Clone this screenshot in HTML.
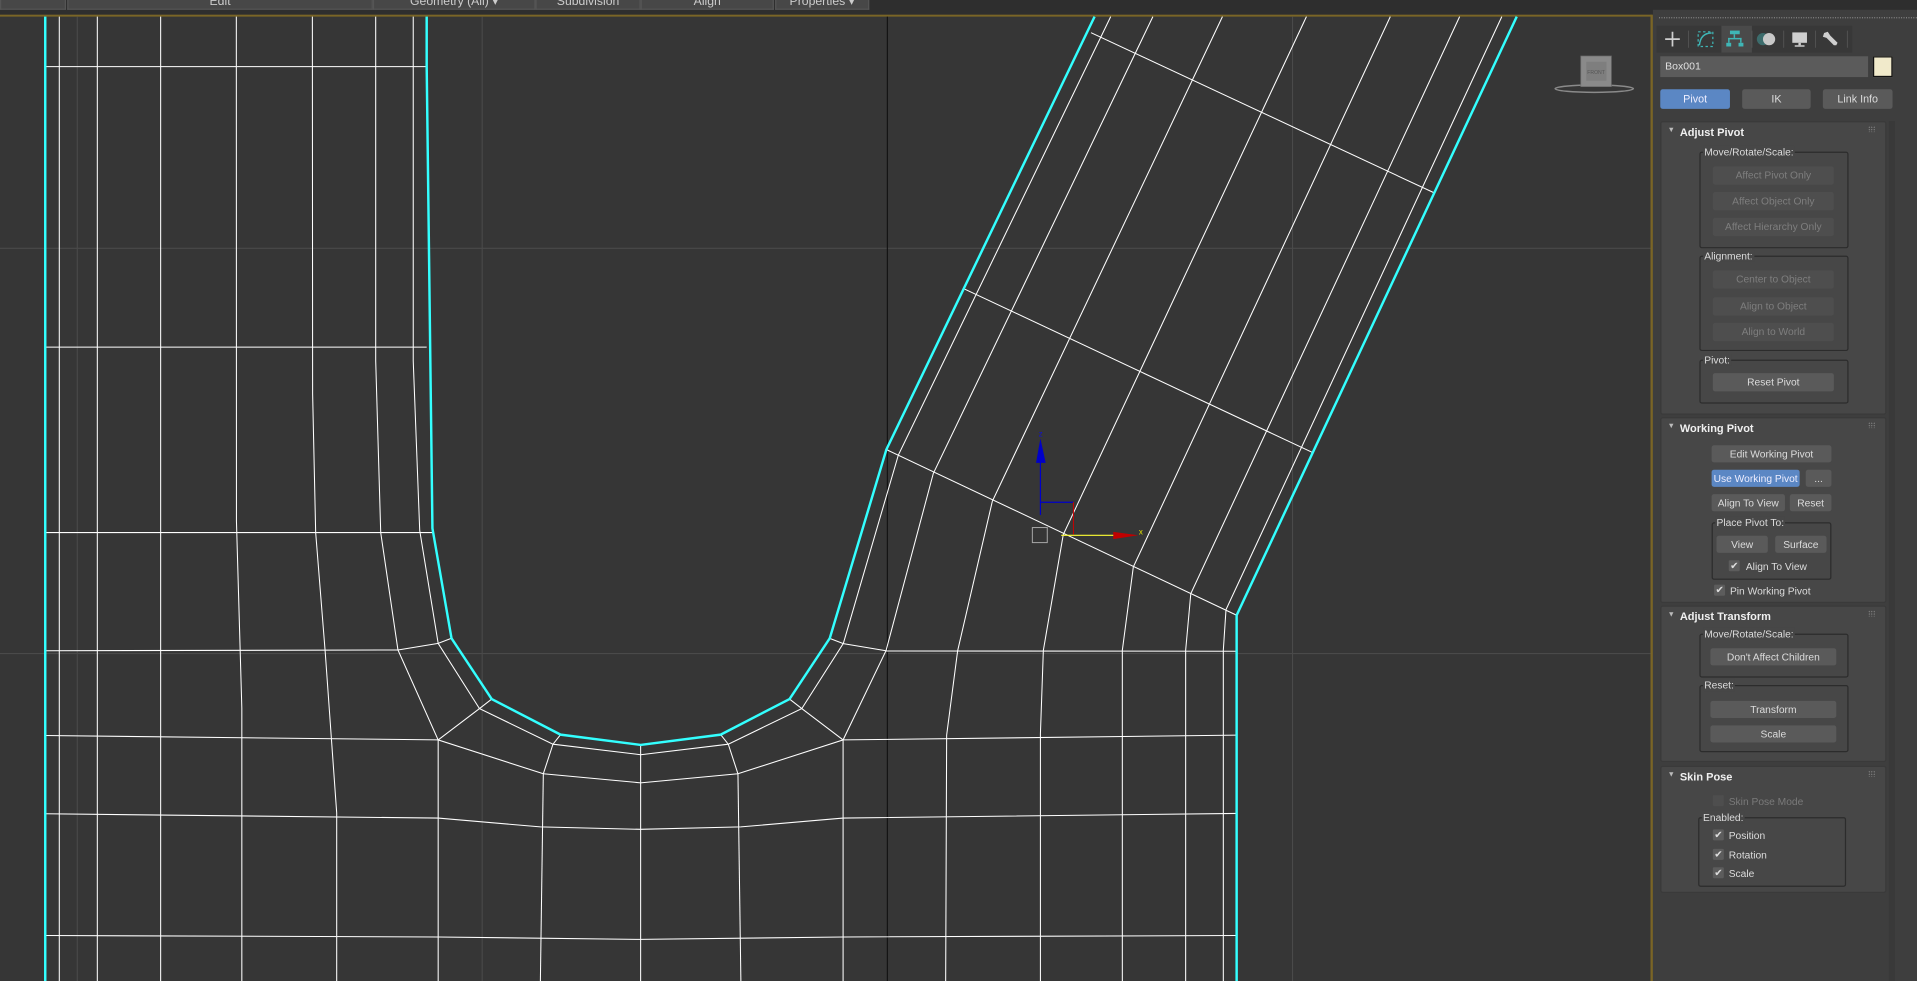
<!DOCTYPE html>
<html><head><meta charset="utf-8">
<style>
html,body{margin:0;padding:0;background:#363636;overflow:hidden;width:1917px;height:981px}
#w{position:absolute;left:0;top:0;width:1568px;height:802px;transform:scale(1.22258,1.22319);transform-origin:0 0;font-family:"Liberation Sans",sans-serif;background:#363636}
.a{position:absolute}
.tb{position:absolute;top:0;height:7px;background:#474747;border:1px solid #555;border-top:none;color:#ccc;font-size:10px;text-align:center;line-height:4px;overflow:hidden}
.btn{position:absolute;height:15px;line-height:15px;background:#5a5a5a;border-radius:2px;color:#dcdcdc;text-align:center;font-size:8.4px;white-space:nowrap;overflow:hidden}
.dis{background:#4e4e4e;color:#7e7e7e}
.blue{background:#5b87c4;color:#eef}
.grp{position:absolute;border:1px solid #2c2c2c;border-radius:2px}
.lbl{position:absolute;color:#dcdcdc;font-size:8.4px;background:#474747;padding:0 1px;line-height:10px;white-space:nowrap}
.ro{position:absolute;left:1358px;width:183px;background:#474747;border:1px solid #3a3a3a;border-radius:2px}
.tt{position:absolute;left:15px;top:3px;color:#f0f0f0;font-size:9px;font-weight:bold;white-space:nowrap}
.tri{position:absolute;left:5px;top:4px;color:#bbb;font-size:6px}
.grip{position:absolute;right:8px;top:3px;width:6px;height:5px;background-image:radial-gradient(#888 35%,transparent 40%);background-size:2px 2px}
.cb{position:absolute;width:9px;height:9px;background:#5c5c5c;border-radius:1px;color:#ddd;font-size:8px;line-height:9px;text-align:center}
.ct{position:absolute;color:#dcdcdc;font-size:8.4px;line-height:10px;white-space:nowrap}
</style></head><body><div id="w">
<!-- top toolbar -->
<div class="a" style="left:0;top:0;width:1568px;height:12px;background:#2e2e2e"></div>
<div class="tb" style="left:0;width:52px"></div>
<div class="tb" style="left:55px;width:248px">Edit</div>
<div class="tb" style="left:305px;width:131px">Geometry (All) ▾</div>
<div class="tb" style="left:438px;width:84px">Subdivision</div>
<div class="tb" style="left:524px;width:107px">Align</div>
<div class="tb" style="left:634px;width:75px">Properties ▾</div>
<div class="a" style="left:0;top:11.5px;width:1351px;height:2px;background:#7a6526"></div>
<!-- viewport -->
<svg class="a" style="left:0;top:0" width="1351" height="802" viewBox="0 0 1351 802">
<rect x="0" y="13.6" width="1351" height="790" fill="#363636"/>
<g stroke="#4a4a4a" stroke-width="0.9" fill="none">
<line x1="63.2" y1="13.6" x2="63.2" y2="802"/><line x1="394.4" y1="13.6" x2="394.4" y2="802"/><line x1="1057.2" y1="13.6" x2="1057.2" y2="802"/>
<line x1="0" y1="203" x2="1351" y2="203"/><line x1="0" y1="534.3" x2="1351" y2="534.3"/>
</g>
<line x1="725.8" y1="13.6" x2="725.8" y2="802" stroke="#111" stroke-width="0.9"/>
<g stroke="#fff" stroke-width="0.85" fill="none">
<line x1="48.5" y1="13.6" x2="48.5" y2="802"/><line x1="79.6" y1="13.6" x2="79.6" y2="802"/><line x1="131.4" y1="13.6" x2="131.4" y2="802"/>
<polyline points="193.3,13.6 193.4,426 197.8,579 197.8,802"/>
<polyline points="255.5,13.6 255.7,321.8 258.2,435.4 266,533 275.4,664.6 275.4,802"/>
<polyline points="307.3,13.6 307.3,295 311.4,435.4 325.5,531.4 358.4,604.9 444.4,632.6 524,640 603.6,632.6 689.6,604.9 724.7,532 763.4,387 943,13.6"/>
<polyline points="338,13.6 338,295 343.3,433.7 358.4,526 392.2,579.3 452.3,608.4 524,617 595.7,608.4 655.8,579.3 689.8,526 734.8,372 908.5,13.6"/>
<line x1="358.4" y1="604.9" x2="358.4" y2="802"/><polyline points="444.4,632.6 442,802"/><line x1="524" y1="609" x2="524" y2="802"/><polyline points="603.6,632.6 606,802"/><line x1="689.6" y1="604.9" x2="689.6" y2="802"/>
<polyline points="325.5,531.4 358.4,526 369.3,521.8"/><polyline points="358.4,604.9 392.2,579.3 402.2,571.5"/><polyline points="444.4,632.6 452.3,608.4 458.5,600.6"/>
<polyline points="603.6,632.6 595.7,608.4 589.5,600.6"/><polyline points="689.6,604.9 655.8,579.3 645.8,571.5"/><polyline points="724.7,532 689.8,526.2 678.9,522"/>
<polyline points="999.9,13.6 811.7,409.7 783.3,532 774.3,601 773.5,802"/>
<polyline points="1068.6,13.6 869.7,437 853.4,531.6 851,600 851,802"/>
<polyline points="1137.2,13.6 927,463.5 918,531.6 918,802"/>
<polyline points="1193.9,13.6 974,485.3 969.8,531.6 969.8,802"/>
<polyline points="1228.4,13.6 1002.8,498.4 1000.6,531.6 1000.6,802"/>
<line x1="892.4" y1="26.7" x2="1172.9" y2="157.6"/><line x1="788.3" y1="236" x2="1073.7" y2="370"/><line x1="725" y1="367.5" x2="1011.5" y2="503"/>
<line x1="37" y1="54.5" x2="349" y2="54.5"/><line x1="37" y1="283.8" x2="349" y2="283.8"/><line x1="37" y1="435.4" x2="353.7" y2="435.4"/>
<line x1="37" y1="532" x2="325.5" y2="531.4"/><line x1="724.7" y1="532.2" x2="1011.5" y2="532.4"/>
<line x1="37" y1="601.3" x2="358.4" y2="604.9"/><line x1="689.6" y1="604.9" x2="1011.5" y2="601"/>
<polyline points="37,665.3 358.4,668.8 442,676 524,678 606,676 689.6,668.8 1011.5,665"/>
<polyline points="37,764.8 358.4,766 524,768 689.6,766 1011.5,764.8"/>
</g>
<g stroke="#33ffff" stroke-width="2" fill="none">
<line x1="37" y1="13.6" x2="37" y2="802"/>
<polyline points="349,13.6 349,54 353.7,431.9 369.3,521.8 402.2,571.5 458.5,600.6 524,609 589.5,600.6 645.8,571.5 678.7,521.8 725,367.5 895.3,13.6"/>
<polyline points="1240.6,13.6 1011.5,503 1011.5,802"/>
</g>
<!-- gizmo -->
<line x1="851" y1="370" x2="851" y2="421" stroke="#0000c8" stroke-width="1"/>
<polygon points="851,358.5 847.4,378.4 855.3,378.4" fill="#0000c8"/>
<polyline points="851,410.6 878,410.6" stroke="#0000c8" stroke-width="1" fill="none"/>
<line x1="878" y1="410.6" x2="878" y2="437" stroke="#c00" stroke-width="0.8"/>
<line x1="868" y1="437.6" x2="911" y2="437.6" stroke="#ffff33" stroke-width="0.9"/>
<polygon points="910.6,434.8 931,437.6 910.6,440.8" fill="#c00000"/>
<text x="931.5" y="437" font-size="6.5" fill="#e0e000" font-family="Liberation Sans,sans-serif">x</text>
<text x="849.5" y="357" font-size="6.5" fill="#1010d0" font-family="Liberation Sans,sans-serif">z</text>
<rect x="844.4" y="431.3" width="12.2" height="12.3" fill="none" stroke="#aaa" stroke-width="0.8"/>
<!-- viewcube -->
<ellipse cx="1304" cy="72.5" rx="32" ry="3" fill="none" stroke="#8a8a8a" stroke-width="1.2"/>
<rect x="1293" y="45.8" width="25" height="25" fill="#8a8a8a" stroke="#6d6d6d" stroke-width="0.6"/>
<rect x="1297.5" y="50.5" width="16.5" height="15.5" fill="#7e7e7e"/>
<text x="1305.5" y="60.5" font-size="4.2" fill="#555" text-anchor="middle" font-family="Liberation Sans,sans-serif">FRONT</text>
</svg>
<!-- panel -->
<div class="a" style="left:1349.6px;top:12px;width:2.2px;height:790px;background:#7a6526"></div>
<div class="a" style="left:1352px;top:0;width:216px;height:802px;background:#3e3e3e"></div>
<div class="a" style="left:1352px;top:0;width:216px;height:8px;background:#2e2e2e"></div>
<div class="a" style="left:1357px;top:14px;width:211px;height:1px;background-image:linear-gradient(90deg,#888 50%,transparent 50%);background-size:2px 1px"></div>
<div class="a" style="left:1545px;top:99px;width:5px;height:703px;background:#393939"></div>
<!-- tabs -->
<div class="a" style="left:1355px;top:20.5px;width:160px;height:22px;background:#383838"></div>
<div class="a" style="left:1408px;top:20.5px;width:25px;height:22px;background:#4a4a4a"></div>
<svg class="a" style="left:1355px;top:20.5px" width="160" height="22" viewBox="0 0 160 22">
<g stroke="#5a5a5a" stroke-width="0.6"><line x1="26" y1="4" x2="26" y2="18"/><line x1="78" y1="4" x2="78" y2="18"/><line x1="104" y1="4" x2="104" y2="18"/><line x1="130" y1="4" x2="130" y2="18"/><line x1="156" y1="4" x2="156" y2="18"/></g>
<g stroke="#cfcfcf" stroke-width="1.4"><line x1="13" y1="5" x2="13" y2="17"/><line x1="7" y1="11" x2="19" y2="11"/></g>
<g stroke="#3fb6b6" stroke-width="1" fill="none"><rect x="34" y="5" width="12" height="12" stroke-dasharray="2 2"/><path d="M35 16 Q36 6 45 6" stroke-width="1.2"/></g>
<g fill="#3fb6b6"><rect x="60" y="4" width="8" height="3"/><rect x="63" y="7" width="1.2" height="3"/><rect x="58.5" y="10" width="11" height="1.2"/><rect x="58.5" y="10" width="1.2" height="4"/><rect x="68.3" y="10" width="1.2" height="4"/><rect x="57" y="14" width="4" height="3"/><rect x="67" y="14" width="4" height="3"/></g>
<circle cx="87" cy="11" r="5" fill="#3c6c6c"/><circle cx="92" cy="11" r="5" fill="#c8c8c8"/>
<rect x="111" y="5.5" width="12" height="8.5" fill="#cfcfcf"/><rect x="116" y="14" width="2" height="2" fill="#cfcfcf"/><rect x="113" y="16" width="8" height="1.2" fill="#cfcfcf"/>
<path d="M137 6 L140 5 L142 8 L148 14 L147 16 L145 16 L139 10 L136 9 Z" fill="#cfcfcf"/>
</svg>
<div class="a" style="left:1358px;top:46px;width:170px;height:17px;background:#5b5b5b;color:#e0e0e0;font-size:8.6px;line-height:17px;padding-left:4px;box-sizing:border-box">Box001</div>
<div class="a" style="left:1532px;top:46px;width:16px;height:17px;background:#f1eacb;border:1px solid #111;box-sizing:border-box"></div>
<div class="btn blue" style="left:1358px;top:73px;width:57px;height:16px;line-height:16px;font-size:8.8px">Pivot</div>
<div class="btn" style="left:1425px;top:73px;width:56px;height:16px;line-height:16px;font-size:8.8px">IK</div>
<div class="btn" style="left:1491px;top:73px;width:57px;height:16px;line-height:16px;font-size:8.8px">Link Info</div>
<!-- Adjust Pivot -->
<div class="ro" style="top:99px;height:238px"><span class="tri">▼</span><span class="tt">Adjust Pivot</span><div class="grip"></div></div>
<div class="grp" style="left:1390px;top:124px;width:120px;height:77px"></div><span class="lbl" style="left:1393px;top:119px">Move/Rotate/Scale:</span>
<div class="btn dis" style="left:1401px;top:136px;width:99px">Affect Pivot Only</div>
<div class="btn dis" style="left:1401px;top:157px;width:99px">Affect Object Only</div>
<div class="btn dis" style="left:1401px;top:178px;width:99px">Affect Hierarchy Only</div>
<div class="grp" style="left:1390px;top:209px;width:120px;height:76px"></div><span class="lbl" style="left:1393px;top:204px">Alignment:</span>
<div class="btn dis" style="left:1401px;top:221px;width:99px">Center to Object</div>
<div class="btn dis" style="left:1401px;top:243px;width:99px">Align to Object</div>
<div class="btn dis" style="left:1401px;top:264px;width:99px">Align to World</div>
<div class="grp" style="left:1390px;top:294px;width:120px;height:34px"></div><span class="lbl" style="left:1393px;top:289px">Pivot:</span>
<div class="btn" style="left:1401px;top:305px;width:99px">Reset Pivot</div>
<!-- Working Pivot -->
<div class="ro" style="top:341px;height:150px"><span class="tri">▼</span><span class="tt">Working Pivot</span><div class="grip"></div></div>
<div class="btn" style="left:1400px;top:364px;width:98px;height:14px;line-height:14px">Edit Working Pivot</div>
<div class="btn blue" style="left:1400px;top:384px;width:72px;height:14px;line-height:14px">Use Working Pivot</div>
<div class="btn" style="left:1477px;top:384px;width:21px;height:14px;line-height:14px">...</div>
<div class="btn" style="left:1400px;top:404px;width:60px;height:14px;line-height:14px">Align To View</div>
<div class="btn" style="left:1464px;top:404px;width:34px;height:14px;line-height:14px">Reset</div>
<div class="grp" style="left:1400px;top:427px;width:96px;height:45px"></div><span class="lbl" style="left:1403px;top:422px">Place Pivot To:</span>
<div class="btn" style="left:1404px;top:438px;width:42px;height:14px;line-height:14px">View</div>
<div class="btn" style="left:1452px;top:438px;width:42px;height:14px;line-height:14px">Surface</div>
<div class="cb" style="left:1414px;top:458px">✔</div><span class="ct" style="left:1428px;top:458px">Align To View</span>
<div class="cb" style="left:1402px;top:478px">✔</div><span class="ct" style="left:1415px;top:478px">Pin Working Pivot</span>
<!-- Adjust Transform -->
<div class="ro" style="top:495px;height:126px"><span class="tri">▼</span><span class="tt">Adjust Transform</span><div class="grip"></div></div>
<div class="grp" style="left:1390px;top:518px;width:120px;height:34px"></div><span class="lbl" style="left:1393px;top:513px">Move/Rotate/Scale:</span>
<div class="btn" style="left:1399px;top:530px;width:103px;height:14px;line-height:14px">Don't Affect Children</div>
<div class="grp" style="left:1390px;top:560px;width:120px;height:53px"></div><span class="lbl" style="left:1393px;top:555px">Reset:</span>
<div class="btn" style="left:1399px;top:573px;width:103px;height:14px;line-height:14px">Transform</div>
<div class="btn" style="left:1399px;top:593px;width:103px;height:14px;line-height:14px">Scale</div>
<!-- Skin Pose -->
<div class="ro" style="top:626px;height:102px"><span class="tri">▼</span><span class="tt">Skin Pose</span><div class="grip"></div></div>
<div class="cb" style="left:1401px;top:650px;background:#4e4e4e"></div><span class="ct" style="left:1414px;top:650px;color:#7a7a7a">Skin Pose Mode</span>
<div class="grp" style="left:1389px;top:668px;width:119px;height:55px"></div><span class="lbl" style="left:1392px;top:663px">Enabled:</span>
<div class="cb" style="left:1401px;top:678px">✔</div><span class="ct" style="left:1414px;top:678px">Position</span>
<div class="cb" style="left:1401px;top:694px">✔</div><span class="ct" style="left:1414px;top:694px">Rotation</span>
<div class="cb" style="left:1401px;top:709px">✔</div><span class="ct" style="left:1414px;top:709px">Scale</span>
</div></body></html>
